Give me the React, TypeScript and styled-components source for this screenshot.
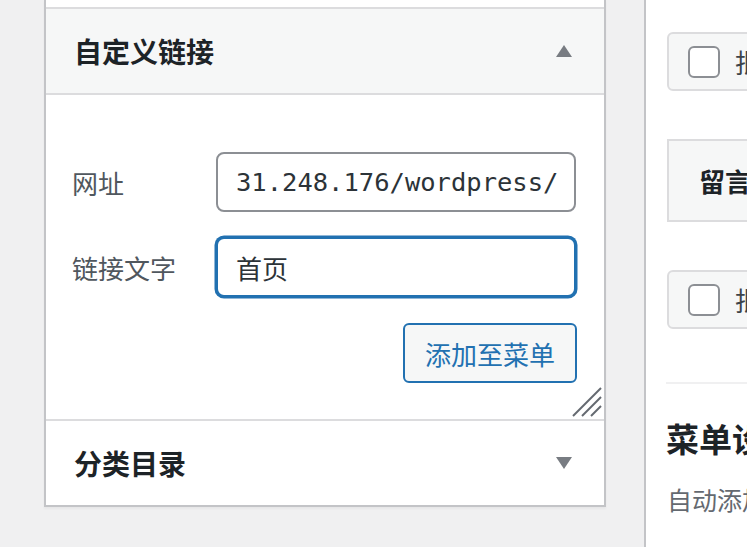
import { FC } from "react";
import styled, { createGlobalStyle } from "styled-components";

const GlobalStyle = createGlobalStyle`
  html, body {
    margin: 0;
    padding: 0;
    background: #f0f0f1;
    font-family: "Noto Sans CJK SC", "Noto Sans", sans-serif;
    color: #1d2327;
  }
  * {
    box-sizing: border-box;
  }
`;

const Page = styled.div`
  display: flex;
  width: 747px;
  height: 547px;
  overflow: hidden;
  padding-left: 44px;
`;

const Panel = styled.div`
  width: 562px;
  flex-shrink: 0;
  align-self: flex-start;
  background: #fff;
  border: 2px solid #c3c4c7;
  border-top: none;
  box-shadow: 0 2px 2px rgba(0, 0, 0, 0.04);
`;

const PrevSection = styled.div`
  height: 7px;
  background: #fff;
`;

const Section = styled.div`
  border-top: 2px solid #dcdcde;
`;

const SectionTitle = styled.h3<{ $open?: boolean }>`
  margin: 0;
  height: ${(p) => (p.$open ? "86px" : "84px")};
  display: flex;
  align-items: center;
  justify-content: space-between;
  padding: 0 32px 0 28px;
  font-size: 28px;
  font-weight: 700;
  color: #1d2327;
  background: ${(p) => (p.$open ? "#f6f7f7" : "#fff")};
  border-bottom: ${(p) => (p.$open ? "2px solid #dcdcde" : "none")};
`;

const Arrow = styled.svg`
  width: 16px;
  height: 12px;
  display: block;
`;

const Body = styled.div`
  position: relative;
  padding: 57px 28px 36px 26px;
  display: flex;
  flex-direction: column;
`;

const FieldRow = styled.div`
  display: flex;
  align-items: center;
  & + & {
    margin-top: 25px;
  }
`;

const Label = styled.label`
  width: 144px;
  flex-shrink: 0;
  font-size: 26px;
  color: #50575e;
`;

const Input = styled.input<{ $mono?: boolean; $focused?: boolean }>`
  width: 360px;
  height: 60px;
  padding: 0 4px 0 18px;
  border: 2px solid ${(p) => (p.$focused ? "#2271b1" : "#8c8f94")};
  border-radius: 8px;
  box-shadow: ${(p) => (p.$focused ? "0 0 0 1.5px #2271b1" : "none")};
  outline: none;
  background: #fff;
  color: #2c3338;
  font-size: ${(p) => (p.$mono ? "25.5px" : "26px")};
  font-family: ${(p) =>
    p.$mono
      ? '"DejaVu Sans Mono", "Liberation Mono", monospace'
      : '"Noto Sans CJK SC", sans-serif'};
  overflow: hidden;
`;

const Actions = styled.div`
  display: flex;
  justify-content: flex-end;
  margin-top: 26px;
  margin-right: -1px;
`;

const Button = styled.button`
  height: 60px;
  padding: 0 20px;
  border: 2px solid #2271b1;
  border-radius: 6px;
  background: #f6f7f7;
  color: #2271b1;
  font-size: 26px;
  font-family: "Noto Sans CJK SC", sans-serif;
`;

const Resize = styled.svg`
  position: absolute;
  right: 2px;
  bottom: 2px;
  width: 30px;
  height: 30px;
`;

const Gutter = styled.div`
  width: 38px;
  flex-shrink: 0;
`;

const Side = styled.div`
  flex: 1;
  height: 547px;
  background: #fff;
  border-left: 2px solid #c3c4c7;
  padding: 32px 0 0 21px;
  overflow: hidden;
`;

const Wide = styled.div`
  width: 420px;
`;

const CheckRow = styled.div`
  height: 59px;
  display: flex;
  align-items: center;
  gap: 15px;
  padding-left: 19px;
  background: #f6f7f7;
  border: 2px solid #dcdcde;
  border-radius: 6px;
  font-size: 26px;
  color: #3c434a;
  white-space: nowrap;
`;

const Checkbox = styled.span`
  width: 32px;
  height: 32px;
  flex-shrink: 0;
  border: 2px solid #8c8f94;
  border-radius: 6px;
  background: #fff;
`;

const ItemBar = styled.div`
  height: 83px;
  margin: 48px 0;
  display: flex;
  align-items: center;
  padding-left: 30px;
  background: #f6f7f7;
  border: 2px solid #dcdcde;
  font-size: 26px;
  font-weight: 700;
  white-space: nowrap;
`;

const Divider = styled.div`
  height: 2px;
  margin-top: 53px;
  margin-left: -1px;
  background: #f0f0f1;
`;

const SettingsTitle = styled.h3`
  margin: 34px 0 0 -1px;
  font-size: 33px;
  line-height: 40px;
  font-weight: 700;
  white-space: nowrap;
`;

const SettingsText = styled.p`
  margin: 24px 0 0 0;
  font-size: 25px;
  line-height: 34px;
  color: #646970;
  white-space: nowrap;
`;

const UpArrow: FC = () => (
  <Arrow viewBox="0 0 16 12">
    <polygon points="8,0 16,12 0,12" fill="#787c82" />
  </Arrow>
);

const DownArrow: FC = () => (
  <Arrow viewBox="0 0 16 12">
    <polygon points="0,0 16,0 8,12" fill="#787c82" />
  </Arrow>
);

export default function App() {
  return (
    <>
      <GlobalStyle />
      <Page>
        <Panel>
          <PrevSection />
          <Section>
            <SectionTitle $open>
              自定义链接
              <UpArrow />
            </SectionTitle>
            <Body>
              <FieldRow>
                <Label>网址</Label>
                <Input $mono defaultValue="31.248.176/wordpress/" readOnly />
              </FieldRow>
              <FieldRow>
                <Label>链接文字</Label>
                <Input $focused defaultValue="首页" readOnly />
              </FieldRow>
              <Actions>
                <Button>添加至菜单</Button>
              </Actions>
              <Resize viewBox="0 0 30 30">
                <g stroke="#646970" strokeWidth="2">
                  <line x1="1" y1="29" x2="29" y2="1" />
                  <line x1="10" y1="29" x2="29" y2="10" />
                  <line x1="19" y1="29" x2="29" y2="19" />
                </g>
              </Resize>
            </Body>
          </Section>
          <Section>
            <SectionTitle>
              分类目录
              <DownArrow />
            </SectionTitle>
          </Section>
        </Panel>
        <Gutter />
        <Side>
          <Wide>
            <CheckRow>
              <Checkbox />
              批量选择
            </CheckRow>
            <ItemBar>留言板</ItemBar>
            <CheckRow>
              <Checkbox />
              批量选择
            </CheckRow>
            <Divider />
            <SettingsTitle>菜单设置</SettingsTitle>
            <SettingsText>自动添加页面</SettingsText>
          </Wide>
        </Side>
      </Page>
    </>
  );
}
